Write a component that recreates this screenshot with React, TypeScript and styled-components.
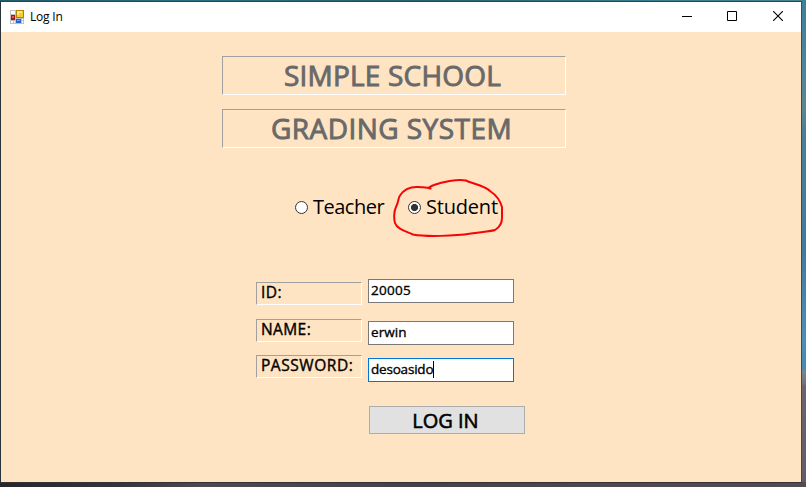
import React from "react";
import styled, { createGlobalStyle } from "styled-components";

const GlobalStyle = createGlobalStyle`
  *, *::before, *::after { box-sizing: border-box; }
  html, body { margin: 0; padding: 0; overflow: hidden; }
  body { font-family: "Open Sans", "Noto Sans", sans-serif; color: #000; }
`;

const Desktop = styled.div`
  width: 806px;
  height: 487px;
  padding: 1px 4px 4px 0;
  overflow: hidden;
  background:
    linear-gradient(90deg, #27262a 0, #35343a 120px, #4c4a50 200px, #444248 420px, #50484e 620px, #534b52 806px) 0 482px / 806px 5px no-repeat,
    linear-gradient(180deg, #3f7d99 0, #47859f 60px, #5b8791 105px, #4a7f99 135px, #4179a0 250px, #4a8fbd 340px, #4589b5 369px, #7b8490 371px, #73737d 383px, #6a646d 386px, #625c65 487px) 802px 0 / 4px 487px no-repeat,
    linear-gradient(90deg, #245a6d 0, #2b6f82 200px, #276071 420px, #397b8e 640px, #478294 806px);
`;

const Window = styled.main`
  display: flex;
  flex-direction: column;
  width: 802px;
  height: 482px;
  border: 1px solid;
  border-color: #29474f #3a4f5a #353338 #29343a;
  background: #ffe4c4;
`;

const TitleBar = styled.header`
  display: flex;
  align-items: center;
  height: 30px;
  flex: none;
  padding-left: 9px;
  background: #fff;
`;

const Caption = styled.span`
  flex: 1;
  padding-left: 5px;
  font-size: 12px;
  line-height: 16px;
  letter-spacing: -0.2px;
`;

const CaptionButton = styled.button<{ $width: number }>`
  display: flex;
  align-items: center;
  justify-content: center;
  width: ${(p) => p.$width}px;
  height: 30px;
  padding: 0 0 2px;
  border: 0;
  background: transparent;
`;

const Form = styled.form`
  display: flex;
  flex-direction: column;
  flex: 1;
  padding-top: 24px;
`;

const Banner = styled.div`
  display: flex;
  flex-direction: column;
  gap: 14px;
  margin-left: 221px;
`;

const Sunken = styled.div`
  border: 1px solid;
  border-color: #a0a0a0 #fff #fff #a0a0a0;
  white-space: nowrap;
`;

const Heading = styled(Sunken)<{ $indent: number; $spacing: number }>`
  width: 344px;
  height: 39px;
  padding-left: ${(p) => p.$indent}px;
  color: #696969;
  font-size: 28px;
  -webkit-text-stroke: 0.9px #696969;
  line-height: 37px;
  letter-spacing: ${(p) => p.$spacing}px;
`;

const Roles = styled.div`
  display: flex;
  align-items: center;
  position: relative;
  height: 58px;
  margin: 31px 0 0 294px;
`;

const RoleOption = styled.label<{ $width: number; $spacing: number }>`
  display: flex;
  align-items: center;
  gap: 5px;
  width: ${(p) => p.$width}px;
  padding-bottom: 3px;
  font-size: 20px;
  line-height: 28px;
  letter-spacing: ${(p) => p.$spacing}px;
  white-space: nowrap;
`;

const RadioMark = styled.span<{ $checked?: boolean }>`
  flex: none;
  width: 13px;
  height: 13px;
  margin-top: 1px;
  border: 1px solid #333;
  border-radius: 50%;
  background: ${(p) =>
    p.$checked ? "radial-gradient(circle, #333 0 3.2px, #fff 3.9px)" : "#fff"};
`;

const Scribble = styled.svg`
  position: absolute;
  left: 97px;
  top: 0;
  width: 114px;
  height: 60px;
  pointer-events: none;
`;

const Fields = styled.div`
  display: flex;
  gap: 6px;
  height: 103px;
  margin: 42px 0 0 255px;
`;

const LabelColumn = styled.div`
  display: grid;
  grid-template-rows: 37px 36px 23px;
  padding-top: 3px;
`;

const InputColumn = styled.div`
  display: grid;
  grid-template-rows: 42px 37px 24px;
`;

const FieldLabel = styled(Sunken)<{ $spacing: number }>`
  width: 106px;
  height: 23px;
  padding-left: 4px;
  font-size: 15.5px;
  -webkit-text-stroke: 0.4px #000;
  line-height: 19px;
  letter-spacing: ${(p) => p.$spacing}px;
`;

const FieldBox = styled.div<{ $focused?: boolean; $spacing: number }>`
  display: flex;
  width: 146px;
  height: 24px;
  padding-left: 2px;
  border: 1px solid ${(p) => (p.$focused ? "#0078d7" : "#7a7a7a")};
  background: #fff;
  font-size: 13.5px;
  -webkit-text-stroke: 0.35px #000;
  line-height: 21px;
  letter-spacing: ${(p) => p.$spacing}px;
`;

const Caret = styled.span`
  width: 1px;
  height: 17px;
  margin-top: 2px;
  background: #000;
`;

const LoginButton = styled.button`
  width: 156px;
  height: 28px;
  margin: 24px 0 0 368px;
  padding: 1px 3px 0 0;
  border: 1px solid #adadad;
  background: #e1e1e1;
  color: #000;
  font: 400 20px/26px "Open Sans", "Noto Sans", sans-serif;
  -webkit-text-stroke: 0.6px #000;
  letter-spacing: 0;
`;

const AppIcon = () => (
  <svg width="15" height="15" viewBox="0 0 15 15" shapeRendering="crispEdges" aria-hidden="true">
    <path d="M0 0h14v14H0z" fill="#c1c1c1" />
    <path d="M1 1h4v3H1zM1 11h2v2H1zM4 11h1v2H4zM12 9h1v1h-1zM12 11h1v2h-1z" fill="#fff" />
    <path d="M6 0h8v8H6z" fill="#b58300" />
    <path d="M7 1h6v6H7z" fill="#ffc928" />
    <path d="M7 1h5v2H9v2H7z" fill="#ffe78c" />
    <path d="M1 5h4v5H1z" fill="#a91414" />
    <path d="M2 6h2v2H2z" fill="#e75c4c" />
    <path d="M6 9h5v4H6z" fill="#2864ce" />
    <path d="M7 10h3v1H7z" fill="#6faaff" />
  </svg>
);

const fields = [
  { label: "ID:", value: "20005", labelSpacing: 0.4, spacing: 0.25 },
  { label: "NAME:", value: "erwin", labelSpacing: 0.4, spacing: 0.1 },
  { label: "PASSWORD:", value: "desoasido", labelSpacing: 0.55, spacing: -0.2, focused: true },
];

export default function App() {
  return (
    <>
      <GlobalStyle />
      <Desktop>
        <Window>
          <TitleBar>
            <AppIcon />
            <Caption>Log In</Caption>
            <CaptionButton $width={44} type="button" aria-label="Minimize">
              <svg width="10" height="10" shapeRendering="crispEdges"><path d="M0 5h10v1H0z" /></svg>
            </CaptionButton>
            <CaptionButton $width={46} type="button" aria-label="Maximize">
              <svg width="10" height="10"><path d="M.5.5h9v9h-9z" fill="none" stroke="#000" /></svg>
            </CaptionButton>
            <CaptionButton $width={46} type="button" aria-label="Close">
              <svg width="10" height="10"><path d="M0 0l10 10M10 0L0 10" fill="none" stroke="#000" strokeWidth="1.1" /></svg>
            </CaptionButton>
          </TitleBar>
          <Form>
            <Banner>
              <Heading $indent={61} $spacing={0.2}>SIMPLE SCHOOL</Heading>
              <Heading $indent={48} $spacing={0.45}>GRADING SYSTEM</Heading>
            </Banner>
            <Roles>
              <RoleOption $width={113} $spacing={-0.5}>
                <RadioMark />Teacher
              </RoleOption>
              <RoleOption $width={100} $spacing={-0.2}>
                <RadioMark $checked />Student
              </RoleOption>
              <Scribble viewBox="0 0 114 60" aria-hidden="true">
                <path
                  d="M38.500 9.500C35 8 31 8.500 27 8C20 7.500 13 8.500 8 16.500C6 19 7 22 4 28C1.500 33 2 41 3 44C5 50 13 52 21 55.500C34 58 63 57 79 54.500C90 53 101 52 103 51C108 48 110 45 110 39V28C108 21 104 16 98 12C92 6 81 5 74 1.500C65 0 50 3 42 6C39 7 38 8 36.500 9"
                  fill="none" stroke="#f50505" strokeWidth="2" strokeLinecap="round" strokeLinejoin="round"
                />
              </Scribble>
            </Roles>
            <Fields>
              <LabelColumn>
                {fields.map((f) => (
                  <FieldLabel key={f.label} $spacing={f.labelSpacing}>{f.label}</FieldLabel>
                ))}
              </LabelColumn>
              <InputColumn>
                {fields.map((f) => (
                  <FieldBox key={f.label} $focused={f.focused} $spacing={f.spacing}>
                    {f.value}
                    {f.focused && <Caret />}
                  </FieldBox>
                ))}
              </InputColumn>
            </Fields>
            <LoginButton type="button">LOG IN</LoginButton>
          </Form>
        </Window>
      </Desktop>
    </>
  );
}
